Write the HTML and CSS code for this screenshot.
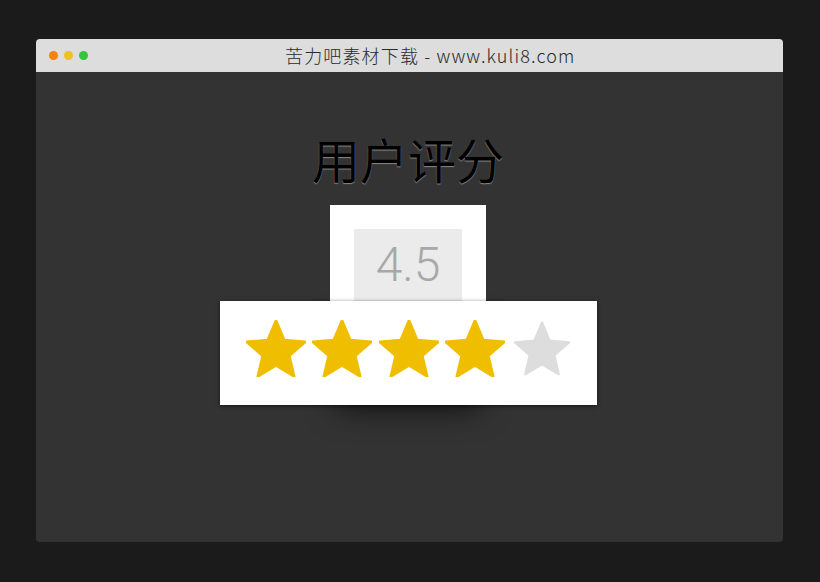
FILE: index.html
```html
<html>
	<head>
		<link rel="stylesheet" href="styles.css">
	</head>
	<body>
		<div id="window">
			<div id="titlebar">
				<span class="dot orange"></span>
				<span class="dot yellow"></span>
				<span class="dot green"></span>
				<span class="caption">苦力吧素材下载 - www.kuli8.com</span>
			</div>

			<div id="content">
				<h1 class="heading">用户评分</h1>
				<div class="score">
					<div class="score-value">4.5</div>
				</div>
				<div class="stars">
					<svg class="star on" viewBox="1.8 1.8 20.4 19.4"><path d="M12 17.27L18.18 21l-1.64-7.03L22 9.24l-7.19-.61L12 2 9.19 8.63 2 9.24l5.46 4.73L5.82 21z"/></svg>
					<svg class="star on" viewBox="1.8 1.8 20.4 19.4"><path d="M12 17.27L18.18 21l-1.64-7.03L22 9.24l-7.19-.61L12 2 9.19 8.63 2 9.24l5.46 4.73L5.82 21z"/></svg>
					<svg class="star on" viewBox="1.8 1.8 20.4 19.4"><path d="M12 17.27L18.18 21l-1.64-7.03L22 9.24l-7.19-.61L12 2 9.19 8.63 2 9.24l5.46 4.73L5.82 21z"/></svg>
					<svg class="star on" viewBox="1.8 1.8 20.4 19.4"><path d="M12 17.27L18.18 21l-1.64-7.03L22 9.24l-7.19-.61L12 2 9.19 8.63 2 9.24l5.46 4.73L5.82 21z"/></svg>
					<svg class="star off" viewBox="0.9 0.95 22.2 21.1"><path d="M12 17.27L18.18 21l-1.64-7.03L22 9.24l-7.19-.61L12 2 9.19 8.63 2 9.24l5.46 4.73L5.82 21z"/></svg>
				</div>
			</div>
		</div>
	</body>
</html>
```

FILE: styles.css
```css
body {
	margin: 0;
	background: #1b1b1b;
	font-family: "Noto Sans CJK SC", "Noto Sans", sans-serif;
}

#window {
	width: 747px;
	height: 503px;
	margin: 39px 0 0 36px;
	background: #333333;
	border-radius: 4px;
	overflow: hidden;
}

#titlebar {
	height: 33px;
	background: #dddddd;
	display: flex;
	align-items: center;
	padding-left: 13px;
}

.dot {
	width: 9px;
	height: 9px;
	border-radius: 50%;
	margin-right: 6px;
}

.orange { background: #f5820b; }
.yellow { background: #efc125; }
.green { background: #35c53a; }

.caption {
	margin-left: 191px;
	font-size: 18px;
	font-weight: 300;
	letter-spacing: 1.15px;
	color: #2a2a2a;
	line-height: 33px;
}

#content {
	padding-right: 3px;
}

.heading {
	margin: 57px 0 18px;
	font-size: 48px;
	line-height: 58px;
	font-weight: normal;
	text-align: center;
	color: #000000;
	text-shadow: 0 1px 1px #888888;
}

.score {
	width: 108px;
	height: 72px;
	padding: 24px 24px 0;
	margin: 0 auto;
	background: #ffffff;
	box-shadow: 0 114px 30px -6px rgba(0, 0, 0, 0.65);
}

.score-value {
	height: 72px;
	background: #ebebeb;
	font-family: Roboto, sans-serif;
	font-weight: 300;
	font-size: 48px;
	line-height: 72px;
	color: #a8a8a8;
	text-align: center;
}

.stars {
	width: 377px;
	height: 104px;
	margin: 0 auto;
	box-sizing: border-box;
	padding: 19px 0 0 26px;
	background: #ffffff;
	box-shadow: 0 1px 4px rgba(0, 0, 0, 0.6);
	display: flex;
	align-items: flex-start;
	gap: 6.5px;
}

.star {
	width: 60px;
	height: 57px;
}

.star path {
	stroke-linejoin: round;
	stroke-width: 0.9;
}

.on path {
	fill: #f0be00;
	stroke: #f0be00;
}

.off path {
	fill: #dddddd;
	stroke: #dddddd;
}
```
